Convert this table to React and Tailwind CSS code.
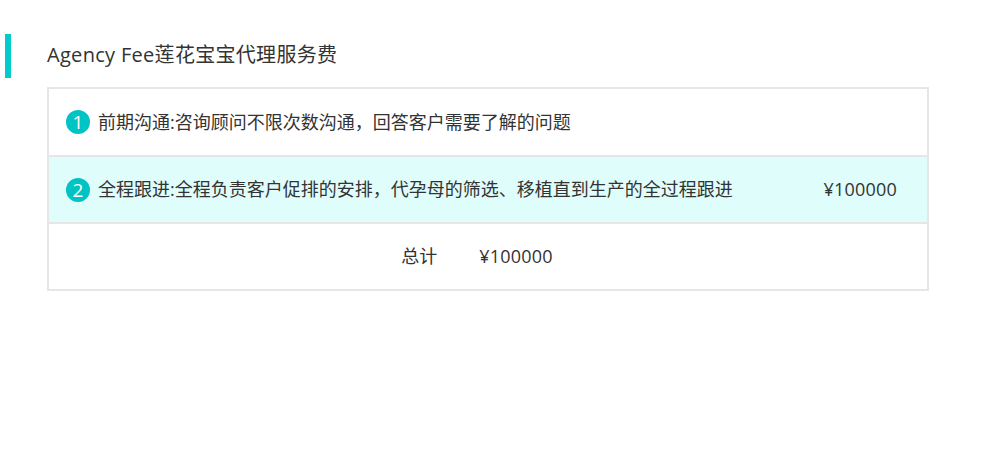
import React from 'react';

const items = [
  { no: 1, text: '前期沟通:咨询顾问不限次数沟通，回答客户需要了解的问题', price: '', h: 'h-[68px]' },
  { no: 2, text: '全程跟进:全程负责客户促排的安排，代孕母的筛选、移植直到生产的全过程跟进', price: '¥100000', active: true, h: 'h-[67px]' },
];

const App = () => {
  return (
    <div className="w-[990px] h-[466px] bg-white text-[#333333] font-['Open_Sans','Noto_Sans_CJK_SC',sans-serif]">
      {/* Title */}
      <div className="flex items-center pt-[34px] pl-[5px]">
        <div className="w-[6px] h-[44px] bg-[#00cccc]" />
        <h2 className="ml-[36px] text-[20px] tracking-[0.3px] leading-[44px] text-[#333333] -mt-[2px]">
          Agency Fee莲花宝宝代理服务费
        </h2>
      </div>

      {/* Table */}
      <div className="ml-[47px] mt-[9px] w-[882px] border-2 border-[#e6e6e6]">
        {items.map((item) => (
          <div
            key={item.no}
            className={`flex items-center ${item.h} pl-[17px] pr-[30px] border-b-2 border-[#e6e6e6]
              ${item.active ? 'bg-[#dffdfb]' : 'bg-white'}`}
          >
            <span className="w-[24px] h-[24px] rounded-full bg-[#00c4c4] text-white text-[19px] leading-[24px] flex items-center justify-center">
              {item.no}
            </span>
            <span className="ml-[8px] text-[18px] flex-1">{item.text}</span>
            {item.price && <span className="text-[18px] tracking-[0.2px]">{item.price}</span>}
          </div>
        ))}
        <div className="flex items-center justify-center h-[65px] pr-[22px] text-[18px]">
          <span>总计</span>
          <span className="ml-[42px] tracking-[0.2px]">¥100000</span>
        </div>
      </div>
    </div>
  );
};

export default App;
